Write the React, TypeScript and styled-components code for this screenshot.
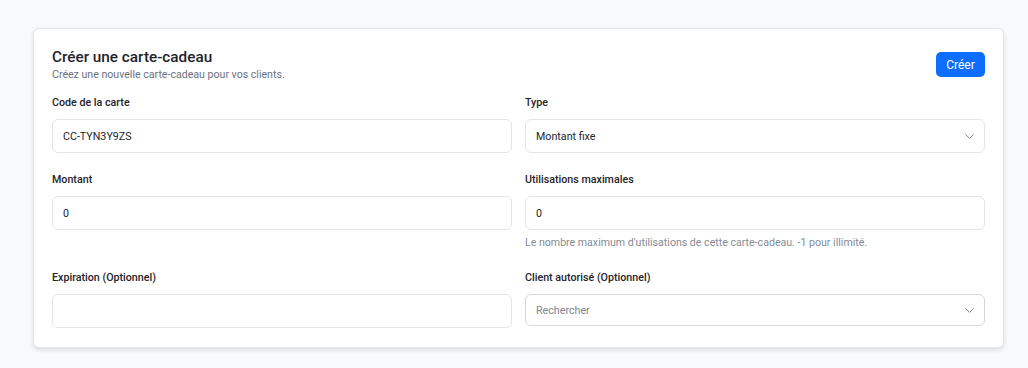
import React from "react";
import styled, { createGlobalStyle } from "styled-components";

const Global = createGlobalStyle`
  html, body { margin: 0; padding: 0; background: #f8f9fb; }
  body { font-family: Roboto, "Noto Sans", sans-serif; color: #212529; }
  * { box-sizing: border-box; }
`;

const Page = styled.div`
  padding: 28px 24px 20px 33px;
`;

const Card = styled.div`
  background: #fff;
  border: 1px solid #e4e6ea;
  border-radius: 6px;
  box-shadow: 0 2px 4px rgba(0, 0, 0, 0.12);
  padding: 17px 18px 19px 18px;
`;

const Header = styled.div`
  display: flex;
  justify-content: space-between;
  align-items: center;
  margin-bottom: 12px;
`;

const Title = styled.h2`
  margin: 0;
  font-size: 15.3px;
  line-height: 22px;
  font-weight: 500;
  color: #1f2328;
`;

const Subtitle = styled.p`
  margin: 0;
  font-size: 10.6px;
  line-height: 14px;
  color: #6b7280;
`;

const Button = styled.button`
  background: #0d6efd;
  color: #fff;
  border: none;
  border-radius: 5px;
  height: 25px;
  width: 49px;
  font-family: inherit;
  font-size: 12px;
  font-weight: 400;
  margin-top: 1px;
`;

const Grid = styled.div`
  display: grid;
  grid-template-columns: 1fr 1fr;
  column-gap: 13px;
  row-gap: 18px;
`;

const Field = styled.div`
  display: flex;
  flex-direction: column;
`;

const Label = styled.label`
  font-size: 10.7px;
  line-height: 17px;
  font-weight: 500;
  color: #1f2328;
  margin-bottom: 8px;
`;

const Box = styled.div<{ $h?: number; $strong?: boolean }>`
  height: ${(p) => p.$h ?? 34}px;
  border: 1px solid ${(p) => (p.$strong ? "#d3d6db" : "#e3e5e9")};
  border-radius: 6px;
  display: flex;
  align-items: center;
  justify-content: space-between;
  padding: 0 7px 0 10px;
  font-size: 10.7px;
  background: #fff;
`;

const Value = styled.span<{ $muted?: boolean }>`
  color: ${(p) => (p.$muted ? "#80868f" : "#212529")};
`;

const Help = styled.p`
  margin: 5px 0 0;
  font-size: 10.6px;
  line-height: 16px;
  color: #868b93;
`;

const Chevron = () => (
  <svg width="15" height="15" viewBox="0 0 24 24" fill="none" stroke="#80858e" strokeWidth="1.6" strokeLinecap="round" strokeLinejoin="round">
    <path d="M6 9l6 6 6-6" />
  </svg>
);

export default function App() {
  return (
    <>
      <Global />
      <Page>
        <Card>
          <Header>
            <div>
              <Title>Créer une carte-cadeau</Title>
              <Subtitle>Créez une nouvelle carte-cadeau pour vos clients.</Subtitle>
            </div>
            <Button>Créer</Button>
          </Header>
          <Grid>
            <Field>
              <Label>Code de la carte</Label>
              <Box><Value>CC-TYN3Y9ZS</Value></Box>
            </Field>
            <Field>
              <Label>Type</Label>
              <Box><Value>Montant fixe</Value><Chevron /></Box>
            </Field>
            <Field>
              <Label>Montant</Label>
              <Box><Value>0</Value></Box>
            </Field>
            <Field>
              <Label>Utilisations maximales</Label>
              <Box><Value>0</Value></Box>
              <Help>Le nombre maximum d'utilisations de cette carte-cadeau. -1 pour illimité.</Help>
            </Field>
            <Field>
              <Label>Expiration (Optionnel)</Label>
              <Box />
            </Field>
            <Field>
              <Label>Client autorisé (Optionnel)</Label>
              <Box $h={32} $strong><Value $muted>Rechercher</Value><Chevron /></Box>
            </Field>
          </Grid>
        </Card>
      </Page>
    </>
  );
}
